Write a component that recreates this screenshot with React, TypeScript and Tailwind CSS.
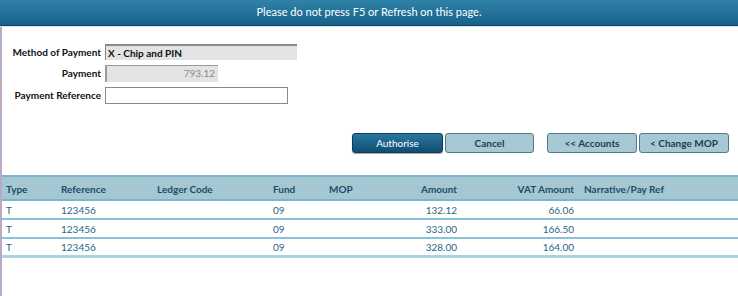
import React from 'react';

const rows = [
  { type: 'T', ref: '123456', ledger: '', fund: '09', mop: '', amount: '132.12', vat: '66.06', narrative: '' },
  { type: 'T', ref: '123456', ledger: '', fund: '09', mop: '', amount: '333.00', vat: '166.50', narrative: '' },
  { type: 'T', ref: '123456', ledger: '', fund: '09', mop: '', amount: '328.00', vat: '164.00', narrative: '' },
];

const cols = 'grid grid-cols-[55px_96px_116px_56px_60px_80px_118px_1fr]';

const Button = ({ label, primary, className = '' }: { label: string; primary?: boolean; className?: string }) => (
  <button
    className={
      (primary
        ? 'h-[20px] rounded-[3px] border border-[#0d3a56] bg-gradient-to-b from-[#2a77a0] to-[#0f4d73] text-white text-[10px] shadow-[0_1px_1px_rgba(0,0,0,0.35)]'
        : 'h-[20px] rounded-[3px] border border-[#4f7b8c] bg-[#a6c8d2] text-[#1d3e52] text-[10px] font-bold') +
      ' ' +
      className
    }
  >
    {label}
  </button>
);

export default function App() {
  return (
    <div
      className="w-[738px] h-[296px] bg-white overflow-hidden flex flex-col"
      style={{ fontFamily: 'Lato, "Open Sans", sans-serif' }}
    >
      <div className="h-[26px] shrink-0 bg-gradient-to-b from-[#2f82a8] to-[#17628a] border-b border-[#0f4866] flex items-center justify-center text-white text-[11px]">
        Please do not press F5 or Refresh on this page.
      </div>
      <div className="h-[1px] shrink-0 bg-[#d6e6ee]" />

      <div className="flex-1 border-l-2 border-[#b9a9c6] flex flex-col">
        <div className="pt-[17px] grid grid-cols-[99px_1fr] gap-x-[4px] gap-y-[5px] items-center text-[10px]">
          <div className="text-right font-bold text-[#111]">Method of Payment</div>
          <div className="w-[192px] h-[16px] bg-[#e3e3e3] border-t-2 border-l border-[#8a8a8a] pl-[2px] font-bold text-[#111] leading-[14px]">
            X - Chip and PIN
          </div>
          <div className="text-right font-bold text-[#111]">Payment</div>
          <div className="w-[113px] h-[17px] bg-[#e3e3e3] border-l-2 border-t border-[#9a9a9a] pr-[3px] text-right text-[#8a8a8a] leading-[15px]">
            793.12
          </div>
          <div className="text-right font-bold text-[#111]">Payment Reference</div>
          <div className="w-[183px] h-[17px] bg-white border border-[#8a8a8a]" />
        </div>

        <div className="mt-[29px] flex pl-[350px]">
          <Button label="Authorise" primary className="w-[91px]" />
          <Button label="Cancel" className="w-[89px] ml-[2px]" />
          <Button label="<< Accounts" className="w-[90px] ml-[13px]" />
          <Button label="< Change MOP" className="w-[90px] ml-[2px]" />
        </div>

        <div className="mt-[22px] text-[10px]">
          <div className={`${cols} h-[26px] pt-[2px] items-center bg-[#a5c7d1] border-t-2 border-b-2 border-[#7cb6cc] font-bold text-[#1c4c6b]`}>
            <div className="pl-[4px]">Type</div>
            <div className="pl-[4px]">Reference</div>
            <div className="pl-[4px]">Ledger Code</div>
            <div className="pl-[4px]">Fund</div>
            <div className="pl-[4px]">MOP</div>
            <div className="pr-[8px] text-right">Amount</div>
            <div className="pr-[9px] text-right">VAT Amount</div>
            <div className="pl-[1px]">Narrative/Pay Ref</div>
          </div>
          {rows.map((r, i) => (
            <div
              key={i}
              className={`${cols} h-[19px] pt-[1px] items-center text-[#2b6585] ${
                i === rows.length - 1 ? 'border-b-[3px] border-[#a9d2e3]' : 'border-b-2 border-[#86c2da]'
              }`}
            >
              <div className="pl-[4px]">{r.type}</div>
              <div className="pl-[4px]">{r.ref}</div>
              <div className="pl-[4px]">{r.ledger}</div>
              <div className="pl-[4px]">{r.fund}</div>
              <div className="pl-[4px]">{r.mop}</div>
              <div className="pr-[8px] text-right">{r.amount}</div>
              <div className="pr-[9px] text-right">{r.vat}</div>
              <div className="pl-[1px]">{r.narrative}</div>
            </div>
          ))}
        </div>
      </div>
    </div>
  );
}
